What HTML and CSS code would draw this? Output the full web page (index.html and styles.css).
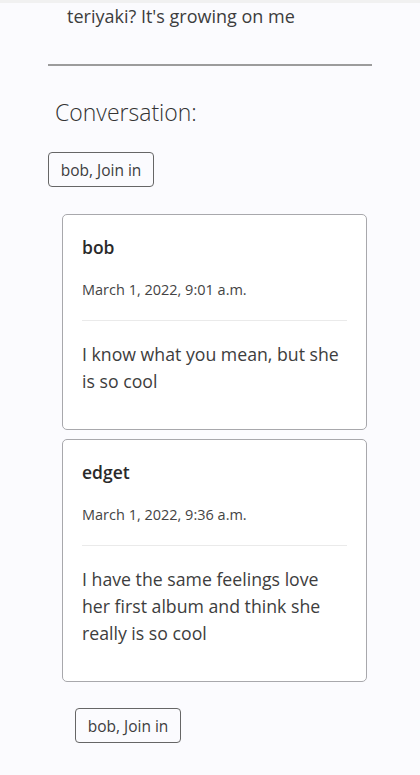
FILE: index.html
```html
<!DOCTYPE html>
<html lang="en">
<head>
<meta charset="utf-8">
<link rel="stylesheet" href="styles.css">
</head>
<body>
<div class="topbar"></div>
<main class="page">
  <p class="intro">teriyaki? It's growing on me</p>
  <hr class="rule">
  <h2 class="conv-title">Conversation:</h2>
  <button class="join join-top">bob, Join in</button>
  <section class="comments">
    <article class="card">
      <h3 class="author">bob</h3>
      <p class="date">March 1, 2022, 9:01 a.m.</p>
      <hr class="divider">
      <p class="body">I know what you mean, but she is so cool</p>
    </article>
    <article class="card">
      <h3 class="author">edget</h3>
      <p class="date">March 1, 2022, 9:36 a.m.</p>
      <hr class="divider">
      <p class="body">I have the same feelings love her first album and think she really is so cool</p>
    </article>
  </section>
  <button class="join join-bottom">bob, Join in</button>
</main>
</body>
</html>
```
FILE: styles.css
```css
html, body {
  margin: 0;
  padding: 0;
}
body {
  background: #fbfbfe;
  font-family: "Open Sans", "Lato", sans-serif;
  color: #3d3d3d;
  height: 775px;
  overflow: hidden;
}
.topbar {
  height: 3px;
  background: #f1f1f1;
}
.page {
  display: flex;
  flex-direction: column;
  align-items: flex-start;
}
.intro {
  margin: 0;
  padding-left: 67px;
  font-size: 18px;
  line-height: 27px;
}
.rule {
  width: 324px;
  margin: 34px 0 0 48px;
  border: 0;
  border-top: 2px solid #9c9c9c;
  box-sizing: border-box;
}
.conv-title {
  margin: 30px 0 0 55px;
  font-size: 23px;
  font-weight: 300;
  line-height: 32px;
  color: #333;
}
.join {
  font-family: inherit;
  font-size: 15.5px;
  color: #3d3d3d;
  background: #fbfbfe;
  border: 1px solid #666;
  border-radius: 4px;
  padding: 0 8px;
  height: 35px;
  width: 106px;
  white-space: nowrap;
}
.join-top {
  margin: 24px 0 0 48px;
}
.comments {
  margin: 27px 0 0 62px;
  display: flex;
  flex-direction: column;
  gap: 9px;
  width: 305px;
}
.card {
  background: #fff;
  border: 1px solid #a8a8ac;
  border-radius: 5px;
  padding: 20px 19px 34px 19px;
}
.author {
  margin: 0;
  font-size: 17.5px;
  font-weight: 600;
  line-height: 24px;
  color: #2a2a2a;
}
.date {
  margin: 20px 0 0;
  font-size: 14.5px;
  line-height: 22px;
  color: #444;
}
.divider {
  margin: 19px 0 0;
  border: 0;
  border-top: 1px solid #eaeaea;
}
.body {
  margin: 20px 0 0;
  font-size: 17.7px;
  line-height: 27px;
  color: #3d3d3d;
}
.join-bottom {
  margin: 26px 0 0 75px;
}
```
